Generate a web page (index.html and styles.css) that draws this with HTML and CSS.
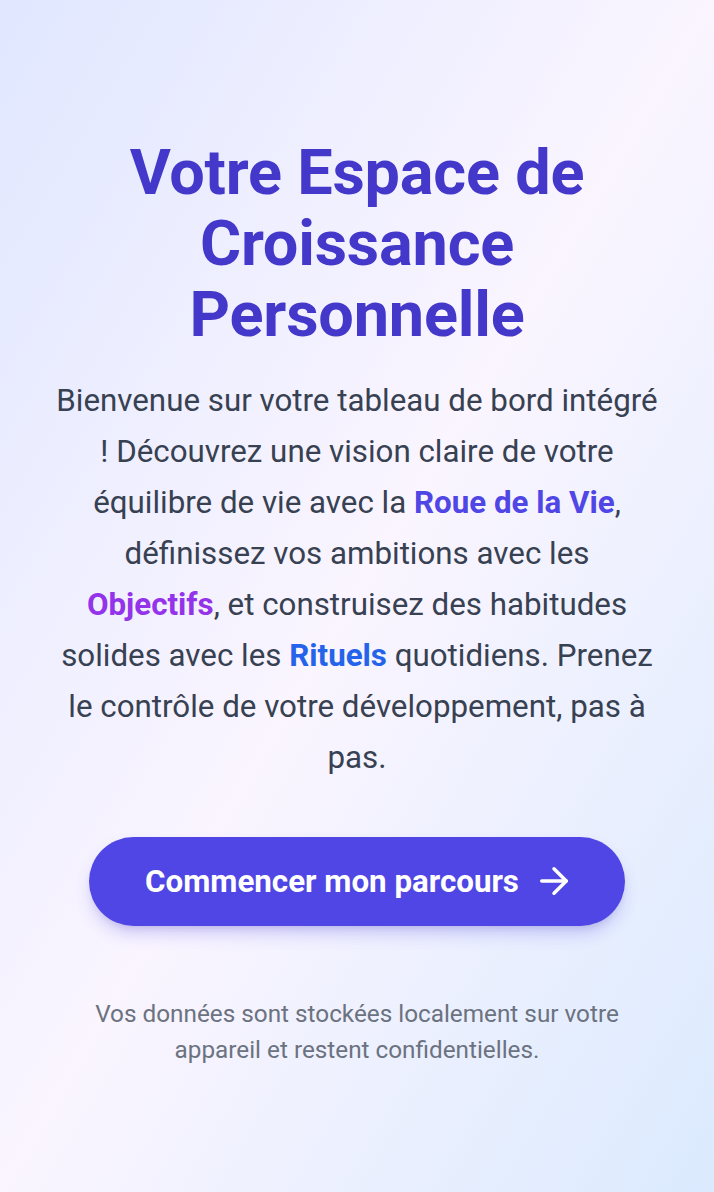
FILE: index.html
```html
<!DOCTYPE html>
<html lang="fr">
<head>
<meta charset="utf-8">
<title>Votre Espace de Croissance Personnelle</title>
<link rel="stylesheet" href="styles.css">
</head>
<body>
<main class="page">
  <section class="hero">
    <h1 class="title">Votre Espace de Croissance Personnelle</h1>
    <p class="intro">Bienvenue sur votre tableau de bord intégré ! Découvrez une vision claire de votre équilibre de vie avec la <strong class="hl-indigo">Roue de la Vie</strong>, définissez vos ambitions avec les <strong class="hl-purple">Objectifs</strong>, et construisez des habitudes solides avec les <strong class="hl-blue">Rituels</strong> quotidiens. Prenez le contrôle de votre développement, pas à pas.</p>
    <button class="cta" type="button">
      <span>Commencer mon parcours</span>
      <svg class="cta-icon" viewBox="0 0 24 24" fill="none" stroke="currentColor" stroke-width="2" stroke-linecap="round" stroke-linejoin="round"><path d="M5 12h14"/><path d="M12 5l7 7-7 7"/></svg>
    </button>
    <p class="note">Vos données sont stockées localement sur votre appareil et restent confidentielles.</p>
  </section>
</main>
</body>
</html>
```
FILE: styles.css
```css
* { box-sizing: border-box; }
html, body { margin: 0; padding: 0; }
body {
  font-family: Roboto, "Noto Sans", "Liberation Sans", sans-serif;
  background: linear-gradient(to bottom right, #e0e7ff 0%, #faf5ff 50%, #dbeafe 100%);
  min-height: 100vh;
}
.page {
  min-height: 100vh;
  display: flex;
  align-items: center;
  justify-content: center;
  padding: 12px 56px 0;
}
.hero {
  width: 100%;
  display: flex;
  flex-direction: column;
  align-items: center;
  text-align: center;
}
.title {
  margin: 0 0 25px;
  font-size: 63px;
  line-height: 71px;
  font-weight: 700;
  color: #4338ca;
  letter-spacing: -0.2px;
}
.intro {
  margin: 0 0 54px;
  font-size: 31.3px;
  line-height: 51px;
  color: #374151;
}
.intro strong { font-weight: 700; }
.hl-indigo { color: #4f46e5; }
.hl-purple { color: #9333ea; }
.hl-blue { color: #2563eb; }
.cta {
  display: flex;
  align-items: center;
  justify-content: center;
  gap: 14px;
  height: 89px;
  padding: 0 50px 0 56px;
  border: none;
  border-radius: 9999px;
  background: #4f46e5;
  color: #ffffff;
  font-family: inherit;
  font-size: 31.3px;
  font-weight: 700;
  box-shadow: 0 10px 18px -4px rgba(79, 70, 229, 0.3), 0 4px 8px -4px rgba(0, 0, 0, 0.12);
}
.cta-icon { width: 42px; height: 42px; }
.note {
  margin: 70px 0 0;
  font-size: 24.3px;
  line-height: 36px;
  color: #6b7280;
}
```
